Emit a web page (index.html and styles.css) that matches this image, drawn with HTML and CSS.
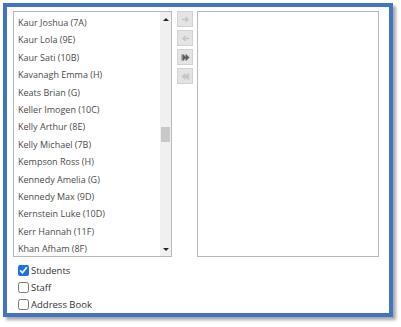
FILE: index.html
```html
<html>
    <head>
        <title>Recipients</title>
        <link rel="stylesheet" href="styles.css">
    </head>
    <body>
        <div class="frame">
            <div class="picker">
                <div class="list-box">
                    <div class="list-items">
                        <div class="item">Kaur Joshua (7A)</div>
                        <div class="item">Kaur Lola (9E)</div>
                        <div class="item">Kaur Sati (10B)</div>
                        <div class="item">Kavanagh Emma (H)</div>
                        <div class="item">Keats Brian (G)</div>
                        <div class="item">Keller Imogen (10C)</div>
                        <div class="item">Kelly Arthur (8E)</div>
                        <div class="item">Kelly Michael (7B)</div>
                        <div class="item">Kempson Ross (H)</div>
                        <div class="item">Kennedy Amelia (G)</div>
                        <div class="item">Kennedy Max (9D)</div>
                        <div class="item">Kernstein Luke (10D)</div>
                        <div class="item">Kerr Hannah (11F)</div>
                        <div class="item">Khan Afham (8F)</div>
                    </div>
                    <div class="scrollbar">
                        <div class="arrow arrow-up"></div>
                        <div class="track">
                            <div class="thumb"></div>
                        </div>
                        <div class="arrow arrow-down"></div>
                    </div>
                </div>
                <div class="buttons">
                    <button class="move-btn">
                        <svg width="9" height="9" viewBox="0 0 9 9"><path d="M1 4.5h6M4.5 2l2.5 2.5-2.5 2.5" fill="none" stroke="#c4c4c4" stroke-width="1.4"/></svg>
                    </button>
                    <button class="move-btn">
                        <svg width="9" height="9" viewBox="0 0 9 9"><path d="M8 4.5H2M4.5 2L2 4.5 4.5 7" fill="none" stroke="#c4c4c4" stroke-width="1.4"/></svg>
                    </button>
                    <button class="move-btn">
                        <svg width="9" height="9" viewBox="0 0 9 9"><path d="M1 1.5v6M2 1.5l3 3-3 3zM5 1.5l3 3-3 3z" fill="#5a5a5a" stroke="#5a5a5a" stroke-width="0.8"/></svg>
                    </button>
                    <button class="move-btn">
                        <svg width="9" height="9" viewBox="0 0 9 9"><path d="M8 1.5v6M7 1.5l-3 3 3 3zM4 1.5l-3 3 3 3z" fill="#c4c4c4" stroke="#c4c4c4" stroke-width="0.8"/></svg>
                    </button>
                </div>
                <div class="list-box chosen"></div>
            </div>
            <div class="groups">
                <label class="group"><input type="checkbox" checked> Students</label>
                <label class="group"><input type="checkbox"> Staff</label>
                <label class="group"><input type="checkbox"> Address Book</label>
            </div>
        </div>
    </body>
</html>
```

FILE: styles.css
```css
body{
    margin: 0;
    background-color: #fff;
    font-family: "Open Sans", "Noto Sans", sans-serif;
}
.frame{
    margin: 3px;
    width: 382px;
    height: 306px;
    border: 4px solid #4472c4;
    box-shadow: 3px 3px 3px rgba(0, 0, 0, 0.35);
    background-color: #fff;
    padding: 0;
    box-sizing: content-box;
}
.picker{
    display: flex;
    padding: 4px 0 0 6px;
    height: 246px;
}
.list-box{
    width: 159px;
    border: 1px solid #b9b9b9;
    box-sizing: border-box;
    display: flex;
    background-color: #fff;
}
.list-items{
    flex: 1;
    padding-top: 2px;
    padding-left: 4px;
    overflow: hidden;
}
.item{
    height: 17.4px;
    line-height: 17.4px;
    font-size: 9px;
    color: #4a4a4a;
    white-space: nowrap;
}
.scrollbar{
    width: 11px;
    background-color: #f0f0f0;
    display: flex;
    flex-direction: column;
}
.arrow{
    height: 14px;
    display: flex;
    justify-content: center;
    align-items: center;
}
.arrow-up::after{
    content: "";
    border-left: 3px solid transparent;
    border-right: 3px solid transparent;
    border-bottom: 3px solid #222;
}
.arrow-down::after{
    content: "";
    border-left: 3px solid transparent;
    border-right: 3px solid transparent;
    border-top: 3px solid #222;
}
.track{
    flex: 1;
    padding-top: 101px;
}
.thumb{
    margin: 0 1px;
    height: 15px;
    background-color: #c8c8c8;
}
.buttons{
    display: flex;
    flex-direction: column;
    gap: 3px;
    margin: 0 4px 0 5px;
}
.move-btn{
    width: 16px;
    height: 16px;
    padding: 0;
    border: 1px solid #d2d2d2;
    background-color: #e4e4e4;
    display: flex;
    justify-content: center;
    align-items: center;
}
.chosen{
    width: 182px;
}
.groups{
    padding: 5px 0 0 11px;
}
.group{
    display: flex;
    align-items: center;
    height: 17px;
    font-size: 9.5px;
    color: #333;
}
.group input{
    width: 11px;
    height: 11px;
    margin: 0 2px 0 0;
    accent-color: #1a73e8;
}
```
